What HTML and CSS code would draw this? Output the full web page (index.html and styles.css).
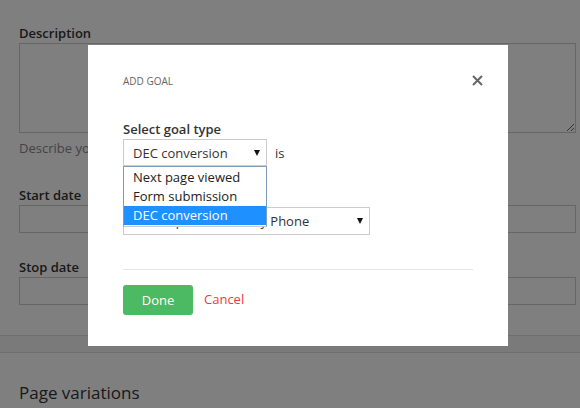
FILE: index.html
```html
<!DOCTYPE html>
<html>
<head>
<meta charset="utf-8">
<link rel="stylesheet" href="styles.css">
</head>
<body>
<div class="page">
  <section class="form">
    <label class="lbl first">Description</label>
    <textarea class="ta"></textarea>
    <p class="help">Describe your experiment and what you want to test</p>
    <label class="lbl">Start date</label>
    <div class="input"></div>
    <label class="lbl lbl2">Stop date</label>
    <div class="input"></div>
  </section>
  <div class="band"></div>
  <section class="variations">
    <h2>Page variations</h2>
  </section>
</div>
<div class="overlay"></div>
<div class="modal">
  <div class="m-head">
    <span class="m-title">Add goal</span>
    <svg class="close" width="11" height="11" viewBox="0 0 11 11"><path d="M1 1L10 10M10 1L1 10" stroke="#666" stroke-width="2"/></svg>
  </div>
  <div class="m-label">Select goal type</div>
  <div class="row">
    <div class="sel sel1">
      <span>DEC conversion</span><i class="arrow"></i>
      <ul class="list">
        <li>Next page viewed</li>
        <li>Form submission</li>
        <li class="on">DEC conversion</li>
      </ul>
    </div>
    <span class="is">is</span>
  </div>
  <div class="sel sel2"><span>Call requests made by Phone</span><i class="arrow"></i></div>
  <hr class="rule">
  <div class="actions">
    <button class="done">Done</button>
    <a class="cancel">Cancel</a>
  </div>
</div>
</body>
</html>
```
FILE: styles.css
```css
html, body {
  margin: 0;
  padding: 0;
  background: #fff;
  font-family: "Open Sans", "Liberation Sans", sans-serif;
  color: #333;
}
.page {
  width: 580px;
  height: 408px;
  overflow: hidden;
}
.form {
  padding: 24px 4px 30px 19px;
  border-bottom: 1px solid #dcdcdc;
}
.lbl {
  display: block;
  font-size: 13px;
  font-weight: 600;
  line-height: 18px;
  color: #333;
  margin-top: 29px;
}
.lbl.first { margin-top: 0; }
.lbl.lbl2 { margin-top: 25px; }
.ta {
  display: block;
  box-sizing: border-box;
  width: 557px;
  height: 90px;
  margin: 1px 0 0 0;
  border: 1px solid #ccc;
  border-radius: 0;
  padding: 0;
  background: #fff;
  font-family: inherit;
}
.help {
  margin: 6px 0 0 0;
  font-size: 13px;
  line-height: 18px;
  color: #888;
}
.input {
  box-sizing: border-box;
  height: 28px;
  width: 557px;
  border: 1px solid #ccc;
  margin-top: 1px;
}
.band {
  height: 16px;
  background: #f5f5f5;
  border-bottom: 1px solid #dcdcdc;
}
.variations {
  padding: 28px 19px 0;
}
.variations h2 {
  margin: 0;
  font-size: 17px;
  font-weight: 400;
  line-height: 24px;
  color: #333;
}
.overlay {
  position: fixed;
  inset: 0;
  background: rgba(0, 0, 0, 0.5);
}
.modal {
  position: absolute;
  left: 88px;
  top: 45px;
  width: 420px;
  height: 301px;
  box-sizing: border-box;
  background: #fff;
  padding: 28px 35px 0;
}
.m-head {
  display: flex;
  justify-content: space-between;
  align-items: center;
  height: 16px;
}
.m-title {
  font-size: 10px;
  text-transform: uppercase;
  color: #666;
  line-height: 16px;
}
.close {
  margin-right: -10px;
  margin-top: -2px;
}
.m-label {
  margin-top: 31px;
  font-size: 13px;
  font-weight: 600;
  line-height: 18px;
  color: #333;
}
.row {
  display: flex;
  align-items: center;
  margin-top: 1px;
}
.sel {
  position: relative;
  box-sizing: border-box;
  border: 1px solid #ccc;
  display: flex;
  align-items: center;
  justify-content: space-between;
  padding: 0 6px 0 9px;
  font-size: 13px;
  color: #333;
  white-space: nowrap;
  overflow: visible;
}
.sel1 {
  width: 144px;
  height: 27px;
}
.sel2 {
  width: 247px;
  height: 28px;
  margin-top: 41px;
}
.arrow {
  width: 0;
  height: 0;
  border-left: 3.5px solid transparent;
  border-right: 3.5px solid transparent;
  border-top: 6px solid #111;
}
.is {
  margin-left: 8px;
  font-size: 13px;
  color: #333;
}
.list {
  position: absolute;
  z-index: 2;
  left: -1px;
  top: 100%;
  width: 144px;
  box-sizing: border-box;
  margin: 1px 0 0 0;
  padding: 1px 0 1px 0;
  list-style: none;
  background: #fff;
  border: 1px solid #7f9db9;
  border-bottom-color: #ccc;
}
.list li {
  height: 19px;
  line-height: 19px;
  padding-left: 9px;
  font-size: 13px;
  color: #222;
}
.list li.on {
  background: #1e90ff;
  color: #fff;
}
.rule {
  margin: 34px 0 0 0;
  border: 0;
  border-top: 1px solid #e5e5e5;
  height: 0;
}
.actions {
  display: flex;
  align-items: center;
  margin-top: 15px;
}
.done {
  width: 70px;
  height: 30px;
  border: 0;
  border-radius: 3px;
  background: #4cb963;
  color: #fff;
  font-family: inherit;
  font-size: 13px;
  padding: 0;
}
.cancel {
  margin-left: 11px;
  font-size: 13px;
  color: #f0393b;
  margin-top: -2px;
}
```
